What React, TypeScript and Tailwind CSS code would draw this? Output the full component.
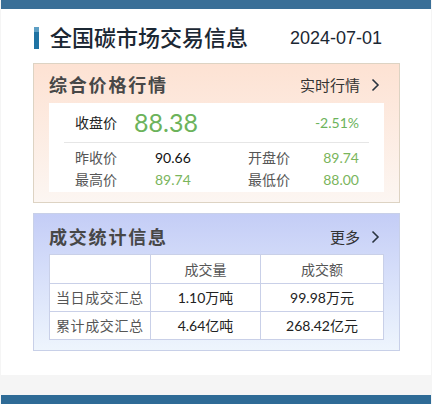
import React from "react";

const CJK = "font-['Lato','Noto_Sans_CJK_SC',sans-serif]";

const quotes = [
  ["昨收价", "90.66", "开盘价", "89.74"],
  ["最高价", "89.74", "最低价", "88.00"],
];

const stats = [
  ["当日成交汇总", "1.10万吨", "99.98万元"],
  ["累计成交汇总", "4.64亿吨", "268.42亿元"],
];

function Chevron() {
  return (
    <svg width="9" height="14" viewBox="0 0 9 14" className="ml-[11px]">
      <path d="M1.5 1.5 L7 7 L1.5 12.5" fill="none" stroke="#2a3440" strokeWidth="1.6" />
    </svg>
  );
}

export default function App() {
  return (
    <div className={`w-[432px] h-[404px] bg-[#f5f5f5] flex flex-col ${CJK}`}>
      <div className="mx-px h-[9px] bg-[#3a6f97]" />

      <div className="mx-px h-[366px] bg-white pl-[32px] pr-[31px] pt-[18px]">
        {/* header */}
        <div className="flex items-center h-[22px]">
          <div className="w-[5px] h-[22px] flex flex-col ml-px">
            <div className="h-[5px] bg-[#5d9fc4]" />
            <div className="flex-1 bg-[#1f73a3]" />
          </div>
          <span className="ml-[11px] text-[22px] leading-none font-medium text-[#1b2733]">
            全国碳市场交易信息
          </span>
          <span className="ml-[42px] text-[18px] leading-none text-[#1b2733] font-['Liberation_Sans',sans-serif]">
            2024-07-01
          </span>
        </div>

        {/* price card */}
        <div className="mt-[14px] h-[140px] border border-[#ddd3c3] bg-gradient-to-b from-[#fde2d3] to-[#fcf6f2] px-[15px]">
          <div className="h-[39px] pt-[3px] flex items-center justify-between">
            <span className="text-[18px] font-bold text-[#474747] tracking-[1.8px]">综合价格行情</span>
            <span className="flex items-center text-[15px] text-[#333] mr-[4px]">
              实时行情
              <Chevron />
            </span>
          </div>
          <div className="bg-white h-[89px] px-[15px]">
            <div className="h-[40px] flex items-center border-b border-[#e6e6e6] pl-[11px] pr-[10px]">
              <span className="text-[14px] text-[#222] w-[59px]">收盘价</span>
              <span className="text-[25px] leading-none text-[#6cb35b]">88.38</span>
              <span className="ml-auto text-[14px] text-[#6cb35b]">-2.51%</span>
            </div>
            <div className="pt-[3px] pl-[11px] pr-[10px]">
              {quotes.map((r) => (
                <div key={r[0]} className="h-[22px] flex items-center text-[14px]">
                  <span className="w-[80px] text-[#555]">{r[0]}</span>
                  <span className={`w-[93px] ${r[1] === "90.66" ? "text-[#111]" : "text-[#7ab55c]"}`}>{r[1]}</span>
                  <span className="text-[#555]">{r[2]}</span>
                  <span className="ml-auto text-[#7ab55c]">{r[3]}</span>
                </div>
              ))}
            </div>
          </div>
        </div>

        {/* stats card */}
        <div className="mt-[10px] h-[138px] border border-[#c8d0e8] bg-gradient-to-b from-[#c4cdf6] to-[#eef5fd] px-[15px]">
          <div className="h-[40px] pt-[6px] flex items-center justify-between">
            <span className="text-[18px] font-bold text-[#474747] tracking-[1.8px]">成交统计信息</span>
            <span className="flex items-center text-[15px] text-[#333] mr-[4px]">
              更多
              <Chevron />
            </span>
          </div>
          <table className="w-[334px] border-collapse bg-white text-[14px] table-fixed">
            <colgroup>
              <col className="w-[101px]" />
              <col className="w-[110px]" />
              <col className="w-[123px]" />
            </colgroup>
            <thead>
              <tr className="h-[29px] text-[#555]">
                <th className="border border-[#c9d0e8] font-normal" />
                <th className="border border-[#c9d0e8] font-normal">成交量</th>
                <th className="border border-[#c9d0e8] font-normal">成交额</th>
              </tr>
            </thead>
            <tbody>
              {stats.map((r) => (
                <tr key={r[0]} className="h-[28px]">
                  <td className="border border-[#c9d0e8] pl-[6px] text-[#555] tracking-[0.6px]">{r[0]}</td>
                  <td className="border border-[#c9d0e8] text-center text-[#222]">{r[1]}</td>
                  <td className="border border-[#c9d0e8] text-center text-[#222]">{r[2]}</td>
                </tr>
              ))}
            </tbody>
          </table>
        </div>
      </div>

      <div className="flex-1" />
      <div className="mx-px h-[9px] bg-[#2e6b96]" />
    </div>
  );
}
